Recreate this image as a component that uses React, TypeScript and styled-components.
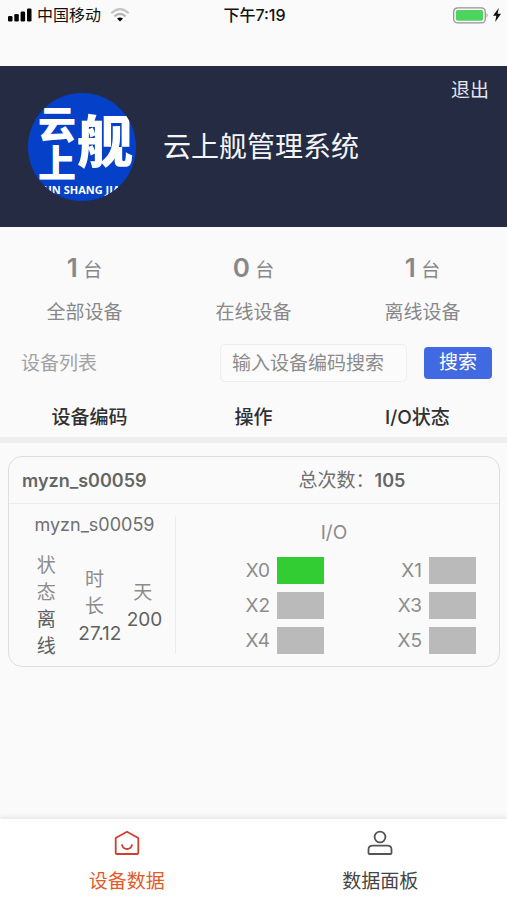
import React from "react";
import styled, { createGlobalStyle } from "styled-components";

const GlobalStyle = createGlobalStyle`
  * { box-sizing: border-box; }
  body {
    margin: 0;
    background: #fafafb;
    color: #333;
    font-family: Inter, "Noto Sans CJK SC", sans-serif;
    font-size: 19px;
    line-height: 27px;
  }
  button, input { font: inherit; }
`;

const Page = styled.div`
  display: flex;
  flex-direction: column;
  min-height: 100vh;
`;

const StatusBar = styled.div`
  display: grid;
  grid-template-columns: 1fr auto 1fr;
  align-items: center;
  height: 30px;
  margin-bottom: 36px;
  padding: 0 6px 0 8px;
  color: #111;
  font-size: 16px;
`;

const StatusGroup = styled.div<{ $end?: boolean }>`
  display: flex;
  align-items: center;
  justify-content: ${(p) => (p.$end ? "flex-end" : "flex-start")};
  gap: ${(p) => (p.$end ? 4 : 5)}px;
`;

const Carrier = styled.span`
  margin-right: 4px;
`;

const Clock = styled.time`
  font-weight: 500;
`;

const Header = styled.header`
  position: relative;
  display: flex;
  align-items: center;
  gap: 27px;
  height: 161px;
  padding: 0 28px;
  background: #252b42;
  color: #f4f5f8;
`;

const Title = styled.h1`
  margin: 0;
  font-size: 28px;
  font-weight: 400;
  line-height: 40px;
`;

const Logout = styled.button`
  position: absolute;
  top: 11px;
  right: 18px;
  padding: 0;
  border: 0;
  background: none;
  color: #e6e7ee;
  cursor: pointer;
`;

const Main = styled.main`
  flex: 1;
`;

const Stats = styled.section`
  display: grid;
  grid-template-columns: repeat(3, 1fr);
  padding-top: 24px;
  color: #888;
  text-align: center;
`;

const StatValue = styled.div`
  line-height: 34px;
  margin-bottom: 11px;
`;

const StatNumber = styled.strong`
  font-size: 26px;
  font-weight: 600;
`;

const SearchRow = styled.form`
  display: flex;
  align-items: center;
  margin-top: 18px;
  padding: 0 15px 0 21px;
`;

const ListTitle = styled.label`
  flex: 1;
  color: #a2a2a2;
`;

const SearchInput = styled.input`
  width: 187px;
  height: 38px;
  margin-right: 17px;
  padding: 0 11px;
  border: 1px solid #eeeeef;
  border-radius: 5px;
  background: #fbfbfc;
  color: #333;
  &::placeholder { color: #8c8c8c; opacity: 1; }
`;

const SearchButton = styled.button`
  width: 68px;
  height: 32px;
  padding: 0;
  border: 0;
  border-radius: 4px;
  background: #4169e1;
  color: #fff;
  line-height: 32px;
  cursor: pointer;
`;

const DeviceTable = styled.table`
  width: 100%;
  margin-top: 15px;
  border-collapse: collapse;
  table-layout: fixed;
`;

const HeadCell = styled.th`
  padding: 7px 0 6px;
  border-bottom: 6px solid #eeeeef;
  color: #303030;
  font-weight: 500;
  &:first-child { padding-left: 10px; }
  &:last-child { padding-right: 10px; }
`;

const CardCell = styled.td`
  padding: 13px 7px 0 8px;
`;

const Card = styled.article`
  border: 1px solid #dedede;
  border-radius: 14px;
`;

const CardHead = styled.div`
  display: grid;
  grid-template-columns: 2fr 3fr;
  padding: 10px 0 9px;
  border-bottom: 1px solid #ececec;
  color: #666;
`;

const DeviceCode = styled.strong`
  padding-left: 13px;
  font-size: 18px;
  font-weight: 600;
`;

const Total = styled.div`
  color: #707070;
  text-align: center;
  strong { color: #666; font-size: 18px; font-weight: 600; }
`;

const CardBody = styled.div`
  display: grid;
  grid-template-columns: 167px 1fr;
  padding: 12px 0;
`;

const Summary = styled.section`
  display: flex;
  flex-direction: column;
  height: 138px;
  padding: 0 8px 0 13px;
  border-right: 1px solid #ececec;
`;

const DeviceName = styled.div`
  margin-top: -5px;
  color: #707070;
  font-size: 18px;
  text-align: center;
`;

const Metrics = styled.div`
  display: grid;
  grid-template-columns: repeat(3, minmax(0, 1fr));
  align-items: center;
  height: 108px;
  margin-top: 14px;
`;

const Metric = styled.div`
  padding: 0 8px;
  color: #8c8c8c;
  text-align: center;
`;

const MetricValue = styled.div`
  color: #606060;
`;

const IoPanel = styled.section`
  padding: 3px 13px 0 6px;
  color: #8c8c8c;
`;

const IoTitle = styled.div`
  margin-bottom: 11px;
  text-align: center;
`;

const IoGrid = styled.div`
  display: grid;
  grid-template-columns: 1fr 1fr;
  row-gap: 8px;
`;

const IoItem = styled.div`
  display: flex;
  justify-content: flex-end;
  gap: 7px;
  padding-right: 10px;
`;

const IoLamp = styled.span<{ $on: boolean }>`
  width: 47px;
  height: 27px;
  background: ${(p) => (p.$on ? "#32cd32" : "#bababa")};
`;

const TabBar = styled.nav`
  display: grid;
  grid-template-columns: 1fr 1fr;
  height: 81px;
  background: #fff;
  box-shadow: 0 -2px 5px rgba(0, 0, 0, 0.09);
`;

const Tab = styled.a<{ $active?: boolean }>`
  display: flex;
  flex-direction: column;
  align-items: center;
  gap: 12px;
  padding-top: 11px;
  color: ${(p) => (p.$active ? "#e65a28" : "#444")};
  text-decoration: none;
  svg { color: ${(p) => (p.$active ? "#cf3f30" : "#555")}; }
`;

const SignalIcon = () => (
  <svg width="24" height="14" viewBox="0 0 24 14" fill="#000" aria-hidden="true">
    <rect x="0" y="8" width="4.500" height="5.500" rx="1.300" />
    <rect x="6.300" y="6" width="4.500" height="7.500" rx="1.300" />
    <rect x="12.600" y="3.500" width="4.500" height="10" rx="1.300" />
    <rect x="19" y="0.500" width="4.500" height="13" rx="1.300" />
  </svg>
);

const WifiIcon = () => (
  <svg width="20" height="14" viewBox="0 0 20 14" fill="none" strokeWidth="2.100" aria-hidden="true">
    <path d="M1.300 5.200Q10-2.800 18.700 5.200" stroke="#c4c4c4" />
    <path d="M4.500 8.400Q10 3.400 15.500 8.400" stroke="#b4b4b4" />
    <path d="M7 10.500Q10 8.300 13 10.500L10 13.500Z" fill="#000" />
  </svg>
);

const BatteryIcon = () => (
  <svg width="36" height="17" viewBox="0 0 36 17" aria-hidden="true">
    <rect x="0.700" y="0.900" width="31.600" height="15" rx="4" fill="#fff" stroke="#929292" strokeWidth="1.300" />
    <rect x="2.800" y="3" width="27.400" height="10.800" rx="2" fill="#4cd45f" />
    <path d="M33.700 6q1.900 2.400 0 4.800z" fill="#929292" />
  </svg>
);

const BoltIcon = () => (
  <svg width="8" height="14" viewBox="0 0 8 14" aria-hidden="true">
    <path d="M5.800 0L0 7.800h3.300L2.200 14 8 5.800H4.600z" fill="#111" />
  </svg>
);

const Logo = () => (
  <svg width="108" height="108" viewBox="0 0 108 108" role="img" aria-label="云上舰">
    <defs>
      <clipPath id="logo-disc">
        <circle cx="54" cy="54" r="54" />
      </clipPath>
    </defs>
    <g clipPath="url(#logo-disc)" fill="#fff" fontFamily='"Noto Sans CJK SC", sans-serif' fontWeight="900">
      <rect width="108" height="108" fill="#0540c8" />
      <text x="10" y="45" fontSize="38">云</text>
      <text x="10" y="84" fontSize="38">上</text>
      <text x="49" y="69" fontSize="56">舰</text>
      <text x="55" y="101" fontSize="11" fontWeight="700" fontFamily='"Open Sans", sans-serif' textAnchor="middle">
        YUN SHANG JIAN
      </text>
    </g>
  </svg>
);

const HomeIcon = () => (
  <svg width="26" height="26" viewBox="0 0 26 26" fill="none" stroke="currentColor" strokeWidth="1.800" strokeLinejoin="round" strokeLinecap="round" aria-hidden="true">
    <path d="M13 1.800L24.300 8v14.700q0 1.300-1.300 1.300H3q-1.300 0-1.300-1.300V8z" />
    <path d="M8 15q1.200 4 5 4t5-4" />
  </svg>
);

const UserIcon = () => (
  <svg width="26" height="26" viewBox="0 0 26 26" fill="none" stroke="currentColor" strokeWidth="1.800" strokeLinejoin="round" aria-hidden="true">
    <circle cx="13" cy="7" r="5.400" />
    <path d="M5.500 15.600h15q4 0 4 4V23q0 1-1 1h-21q-1 0-1-1v-3.400q0-4 4-4z" />
  </svg>
);

const stats = [
  { count: 1, label: "全部设备" },
  { count: 0, label: "在线设备" },
  { count: 1, label: "离线设备" },
];

const metrics = [
  { label: "状态", value: "离线" },
  { label: "时长", value: "27.12" },
  { label: "天", value: "200" },
];

const inputs = [true, false, false, false, false, false];

export default function App() {
  return (
    <Page>
      <GlobalStyle />
      <StatusBar>
        <StatusGroup>
          <SignalIcon />
          <Carrier>中国移动</Carrier>
          <WifiIcon />
        </StatusGroup>
        <Clock>下午7:19</Clock>
        <StatusGroup $end>
          <BatteryIcon />
          <BoltIcon />
        </StatusGroup>
      </StatusBar>
      <Header>
        <Logo />
        <Title>云上舰管理系统</Title>
        <Logout type="button">退出</Logout>
      </Header>
      <Main>
        <Stats>
          {stats.map((s) => (
            <div key={s.label}>
              <StatValue>
                <StatNumber>{s.count}</StatNumber> 台
              </StatValue>
              <div>{s.label}</div>
            </div>
          ))}
        </Stats>
        <SearchRow onSubmit={(e) => e.preventDefault()}>
          <ListTitle htmlFor="device-search">设备列表</ListTitle>
          <SearchInput id="device-search" type="text" placeholder="输入设备编码搜索" />
          <SearchButton type="submit">搜索</SearchButton>
        </SearchRow>
        <DeviceTable>
          <thead>
            <tr>
              <HeadCell scope="col">设备编码</HeadCell>
              <HeadCell scope="col">操作</HeadCell>
              <HeadCell scope="col">I/O状态</HeadCell>
            </tr>
          </thead>
          <tbody>
            <tr>
              <CardCell colSpan={3}>
                <Card>
                  <CardHead>
                    <DeviceCode>myzn_s00059</DeviceCode>
                    <Total>
                      总次数：<strong>105</strong>
                    </Total>
                  </CardHead>
                  <CardBody>
                    <Summary>
                      <DeviceName>myzn_s00059</DeviceName>
                      <Metrics>
                        {metrics.map((m) => (
                          <Metric key={m.label}>
                            {m.label}
                            <MetricValue>{m.value}</MetricValue>
                          </Metric>
                        ))}
                      </Metrics>
                    </Summary>
                    <IoPanel>
                      <IoTitle>I/O</IoTitle>
                      <IoGrid>
                        {inputs.map((on, i) => (
                          <IoItem key={i}>
                            X{i}
                            <IoLamp $on={on} />
                          </IoItem>
                        ))}
                      </IoGrid>
                    </IoPanel>
                  </CardBody>
                </Card>
              </CardCell>
            </tr>
          </tbody>
        </DeviceTable>
      </Main>
      <TabBar>
        <Tab href="#devices" $active aria-current="page">
          <HomeIcon />
          设备数据
        </Tab>
        <Tab href="#dashboard">
          <UserIcon />
          数据面板
        </Tab>
      </TabBar>
    </Page>
  );
}
